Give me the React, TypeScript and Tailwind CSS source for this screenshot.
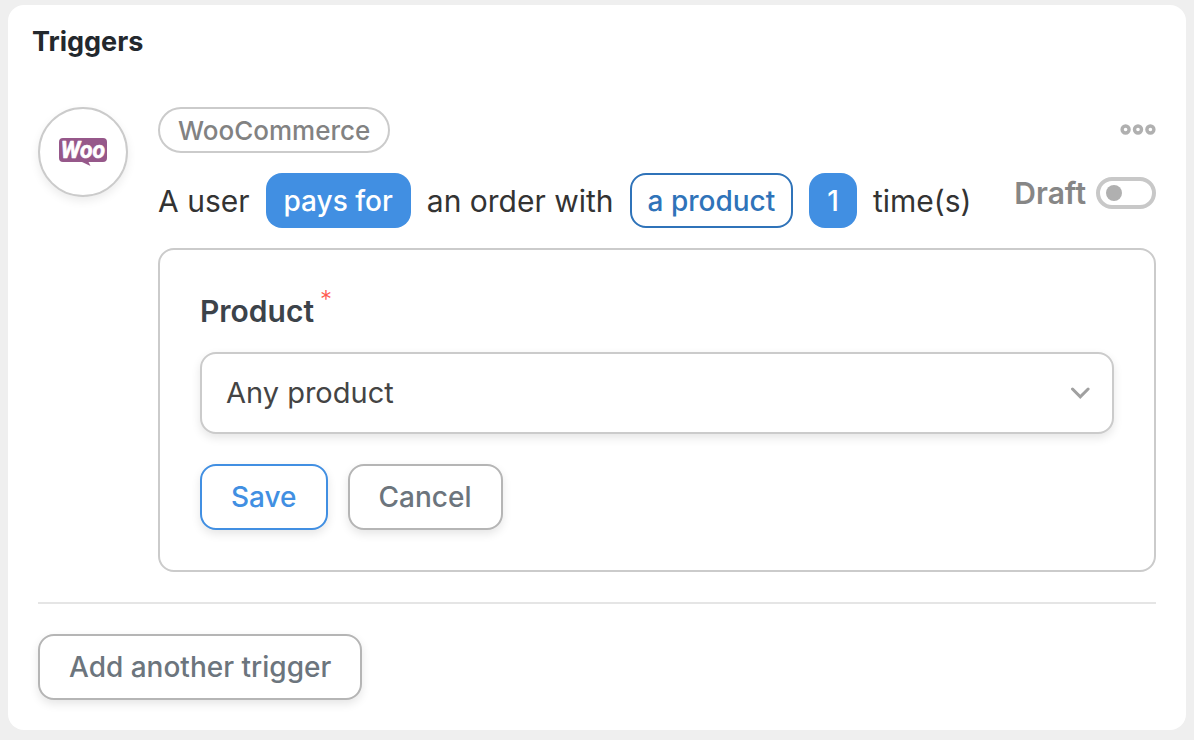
import { useState } from "react";

function WooLogo() {
  return (
    <svg width="48" height="30" viewBox="0 0 48 30" role="img" aria-label="Woo">
      <path
        d="M4 1h40A4 4 0 0 1 48 5v16a4 4 0 0 1-4 4H29.500l2 4L23 25H4A4 4 0 0 1 0 21V5A4 4 0 0 1 4 1z"
        fill="#96588a"
      />
      <text
        x="24"
        y="21"
        textAnchor="middle"
        fill="#fff"
        stroke="#fff"
        strokeWidth="0.6"
        strokeLinejoin="round"
        className="font-['Roboto',sans-serif] text-[23px] font-bold italic"
      >
        Woo
      </text>
    </svg>
  );
}

function DotsIcon() {
  return (
    <svg width="36" height="12" viewBox="0 0 36 12" fill="none" stroke="#b0b0b0" strokeWidth="3.4">
      <circle cx="5.600" cy="5.500" r="3.500" />
      <circle cx="18" cy="5.500" r="3.500" />
      <circle cx="30.400" cy="5.500" r="3.500" />
    </svg>
  );
}

function TriggerSentence() {
  return (
    <div className="flex flex-wrap items-center gap-4 text-[30px] leading-9 text-[#333]">
      <span>A user</span>
      <button className="h-[55px] rounded-2xl bg-[#418fe2] px-[18px] text-[28px] font-medium text-white">
        pays for
      </button>
      <span>an order with</span>
      <button className="h-[55px] rounded-2xl border-2 border-[#2f73b9] px-4 text-[28px] font-medium text-[#2f73b9]">
        a product
      </button>
      <button className="h-[55px] rounded-2xl bg-[#418fe2] px-[18px] text-[28px] font-medium text-white">
        1
      </button>
      <span>time(s)</span>
    </div>
  );
}

export default function App() {
  const [live, setLive] = useState(false);

  return (
    <main className="min-h-screen bg-[#efefef] px-2 pt-[5px] pb-2.5 font-['Inter',sans-serif]">
      <section className="rounded-2xl bg-white px-[30px] pb-[30px]">
        <h2 className="-ml-1.5 pt-[18px] text-[27px] leading-[38px] font-bold text-[#23282d]">
          Triggers
        </h2>

        <div className="mt-[46px] flex gap-[30px]">
          <div className="flex size-[90px] shrink-0 items-center justify-center rounded-full border-2 border-[#cbcbcb] shadow-[0_4px_10px_rgba(0,0,0,0.08)]">
            <WooLogo />
          </div>

          <div className="min-w-0 grow">
            <div className="flex justify-between">
              <div className="flex flex-col items-start gap-5">
                <span className="flex h-[46px] items-center rounded-full border-2 border-[#cbcbcb] px-[18px] text-[26px] font-medium text-[#828282]">
                  WooCommerce
                </span>
                <TriggerSentence />
              </div>

              <div className="flex shrink-0 flex-col items-end gap-6">
                <button className="flex h-[46px] items-center" aria-label="More options">
                  <DotsIcon />
                </button>
                <label className="flex h-8 items-center gap-2.5 text-[30px] font-semibold text-[#868686]">
                  Draft
                  <input
                    type="checkbox"
                    role="switch"
                    checked={live}
                    onChange={(e) => setLive(e.target.checked)}
                    className="flex h-8 w-[60px] appearance-none items-center rounded-full border-4 border-[#c8c8c8] px-1.5 before:size-4 before:rounded-full before:bg-[#b0b0b0] checked:justify-end"
                  />
                </label>
              </div>
            </div>

            <form
              className="mt-5 rounded-2xl border-2 border-[#cbcbcb] p-10"
              onSubmit={(e) => e.preventDefault()}
            >
              <label
                htmlFor="product"
                className="flex gap-1.5 text-[30px] leading-[42px] font-semibold text-[#3c434a]"
              >
                Product
                <span className="text-2xl leading-5 font-light text-[#ff5a4f]">*</span>
              </label>
              <div className="mt-5 grid items-center">
                <select
                  id="product"
                  className="col-start-1 row-start-1 h-[82px] w-full appearance-none rounded-2xl border-2 border-[#cbcbcb] bg-white px-6 text-[29px] text-[#444] shadow-[0_4px_10px_rgba(0,0,0,0.1)]"
                >
                  <option>Any product</option>
                </select>
                <svg
                  className="pointer-events-none col-start-1 row-start-1 mr-6 justify-self-end"
                  width="20"
                  height="12"
                  viewBox="0 0 20 12"
                  fill="none"
                  stroke="#a0a0a0"
                  strokeWidth="3"
                  strokeLinecap="round"
                >
                  <path d="M2.500 2l7.800 7.800L18.100 2" />
                </svg>
              </div>
              <div className="mt-[30px] flex gap-5">
                <button
                  type="submit"
                  className="h-[66px] rounded-2xl border-2 border-[#418fe2] bg-white px-[29px] text-[28px] font-medium text-[#418fe2] shadow-[0_4px_10px_rgba(0,0,0,0.1)]"
                >
                  Save
                </button>
                <button
                  type="button"
                  className="h-[66px] rounded-2xl border-2 border-[#b5b5b5] bg-white px-[29px] text-[28px] font-medium text-[#6c757d] shadow-[0_4px_10px_rgba(0,0,0,0.1)]"
                >
                  Cancel
                </button>
              </div>
            </form>
          </div>
        </div>

        <hr className="my-[30px] border-t-2 border-[#e5e5e5]" />

        <button className="block h-[66px] rounded-2xl border-2 border-[#b5b5b5] bg-white px-[29px] text-[28px] font-medium text-[#6c757d] shadow-[0_4px_10px_rgba(0,0,0,0.1)]">
          Add another trigger
        </button>
      </section>
    </main>
  );
}
